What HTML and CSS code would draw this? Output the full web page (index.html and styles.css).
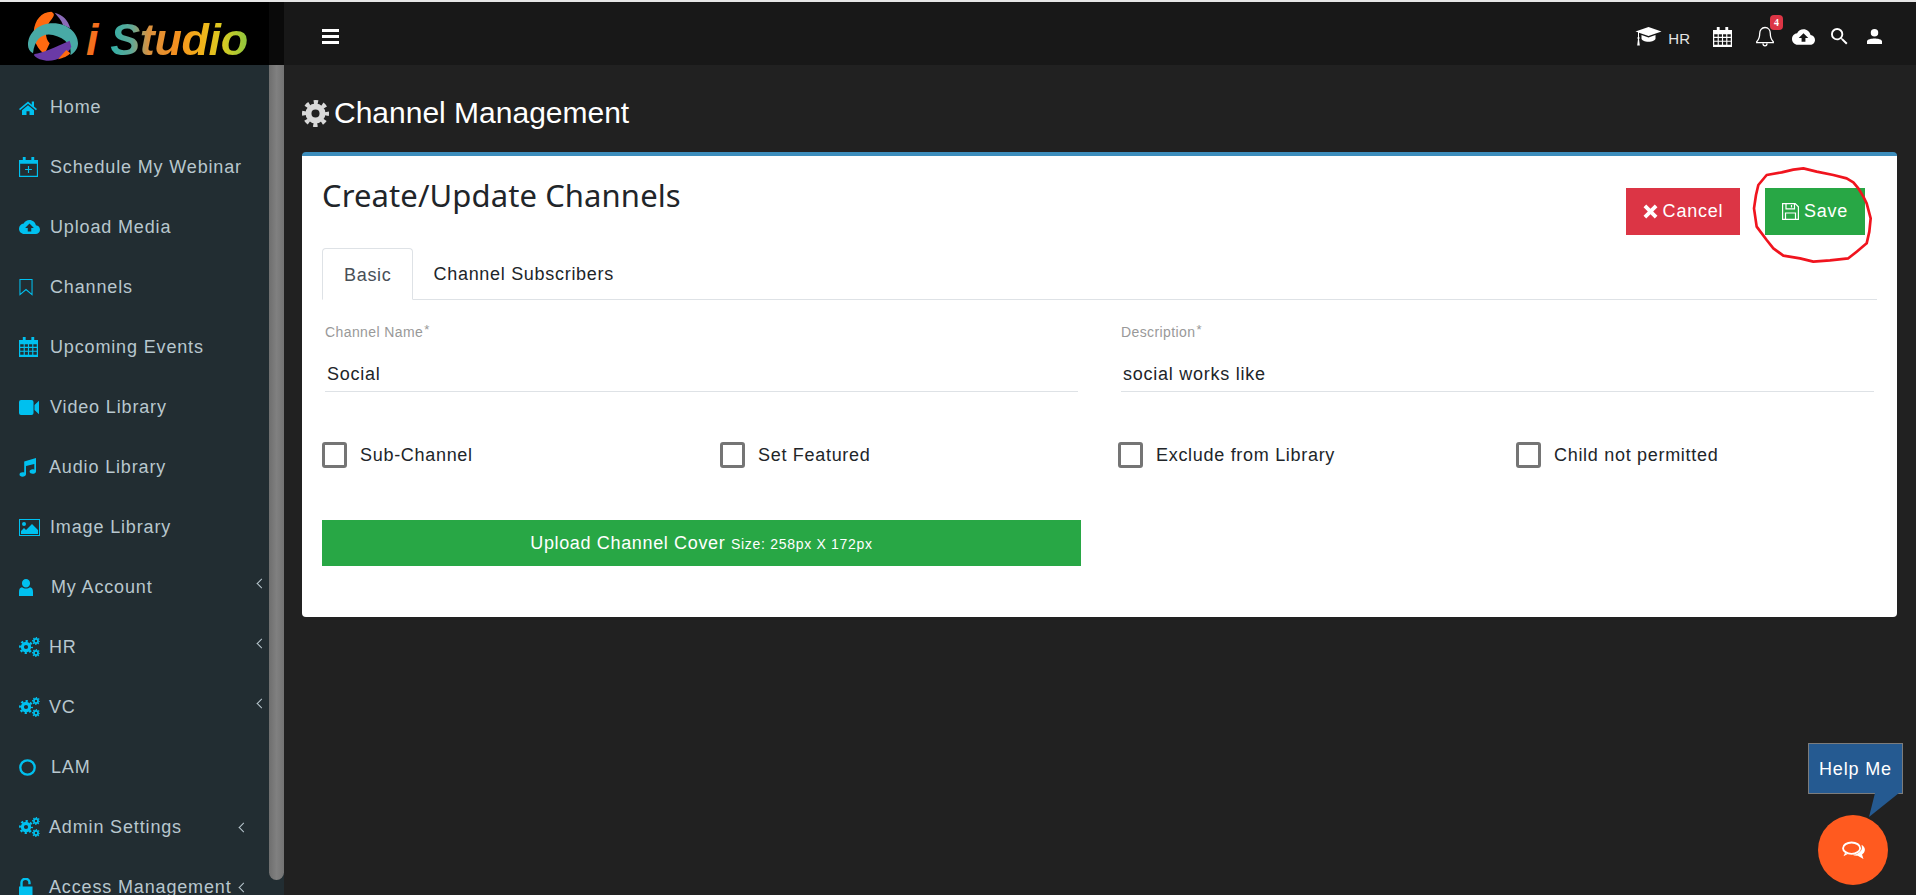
FILE: index.html
```html
<!DOCTYPE html>
<html lang="en">
<head>
    <meta charset="UTF-8">
    <meta name="viewport" content="width=device-width, initial-scale=1.0">
    <title>iStudio - Channel Management</title>
    <link rel="stylesheet" href="styles.css">
</head>
<body>
    <!-- Icon sprite -->
    <svg class="sprite" xmlns="http://www.w3.org/2000/svg">
        <symbol id="i-home" viewBox="0 0 24 20"><path d="M12 2 0 12l1.4 1.7L12 5l10.600 8.700L24 12l-4-3.300V2h-3v4.200zM4 13.500V20h6v-5h4v5h6v-6.500L12 7z"/></symbol>
        <symbol id="i-cal-plus" viewBox="0 0 20 21"><path fill-rule="evenodd" d="M4 0h3v3h6V0h3v3h4v18H0V3h4zM1.200 7v12.800h17.600V7zM9.400 9.500h1.200v3h3v1.200h-3v3H9.400v-3h-3v-1.200h3z"/></symbol>
        <symbol id="i-cloud-up" viewBox="0 0 24 18"><path fill-rule="evenodd" d="M19.350 7.040C18.670 3.590 15.640 1 12 1 9.110 1 6.600 2.640 5.350 5.040 2.340 5.360 0 7.910 0 11c0 3.310 2.690 6 6 6h13c2.760 0 5-2.240 5-5 0-2.640-2.050-4.780-4.650-4.960zM14 10v4h-4v-4H7l5-5 5 5z"/></symbol>
        <symbol id="i-bookmark" viewBox="0 0 14 18"><path fill="none" stroke="currentColor" stroke-width="1.100" d="M.6.600h12.800v16l-6.400-5.500-6.400 5.500z"/></symbol>
        <symbol id="i-calendar" viewBox="0 0 20 21"><path fill-rule="evenodd" d="M4 0h3v3h6V0h3v3h4v18H0V3h4zM1.300 7.500v2.800h3.600V7.500zm4.800 0v2.800h3.300V7.500zm4.500 0v2.800h3.300V7.500zm4.500 0v2.800h3.600V7.500zM1.300 11.500v2.900h3.600v-2.900zm4.800 0v2.900h3.300v-2.900zm4.500 0v2.900h3.300v-2.900zm4.500 0v2.900h3.600v-2.900zM1.300 15.600v3.100h3.600v-3.100zm4.800 0v3.100h3.300v-3.100zm4.500 0v3.100h3.300v-3.100zm4.500 0v3.100h3.600v-3.100z"/></symbol>
        <symbol id="i-video" viewBox="0 0 20 15"><path d="M2 0h10.500a2 2 0 0 1 2 2v11a2 2 0 0 1-2 2H2a2 2 0 0 1-2-2V2a2 2 0 0 1 2-2zM15.500 5 20 .8v13.400L15.500 10z"/></symbol>
        <symbol id="i-music" viewBox="0 0 17 19"><path d="M17 0v13.500c0 1.500-1.800 2.300-3.400 2.300s-3-.8-3-2.200 1.500-2.300 3-2.300c.6 0 1.200.1 1.700.4V6L7 8v8.300c0 1.500-1.800 2.400-3.500 2.400S.5 17.900.5 16.500s1.400-2.300 3-2.300c.6 0 1.200.1 1.700.4V3.500z"/></symbol>
        <symbol id="i-image" viewBox="0 0 21 17"><path fill-rule="evenodd" d="M0 0h21v17H0zm1 1v15h19V1zM5 3a2 2 0 1 1 0 4 2 2 0 0 1 0-4zM2 15v-3l3-3 2 2 6-6 6 6v4z"/></symbol>
        <symbol id="i-user" viewBox="0 0 14 17"><path d="M7 0a4 4 0 0 1 4 4.200A4 4 0 0 1 7 8.400a4 4 0 0 1-4-4.200A4 4 0 0 1 7 0zM3 8.200c1 .9 2.500 1.400 4 1.400s3-.5 4-1.400c1.900.3 3 1.700 3 4.800V17H0v-4c0-3.100 1.100-4.500 3-4.800z"/></symbol>
        <symbol id="i-gear" viewBox="2 2 20 20"><circle cx="12" cy="12" r="5.200" fill="none" stroke="currentColor" stroke-width="4.400"/><circle cx="12" cy="12" r="8.500" fill="none" stroke="currentColor" stroke-width="3" stroke-dasharray="3.200 3.480" stroke-dashoffset="1.600"/></symbol>
        <symbol id="i-gears" viewBox="0 0 21 20"><use href="#i-gear" x="0" y="3" width="14" height="14"/><use href="#i-gear" x="13" y="0" width="8" height="8"/><use href="#i-gear" x="13" y="12" width="8" height="8"/></symbol>
        <symbol id="i-circle" viewBox="0 0 17 17"><circle cx="8.500" cy="8.500" r="7.200" fill="none" stroke="currentColor" stroke-width="2.300"/></symbol>
        <symbol id="i-unlock" viewBox="0 0 14 19"><path fill="none" stroke="currentColor" stroke-width="2.400" d="M2.500 9V4.700a4 4 0 0 1 8 0v1.500"/><path d="M0 8.500h13.500V19H0z"/></symbol>
        <symbol id="i-cap" viewBox="0 0 26 19"><path fill-rule="evenodd" d="M13 0 26 4.500 13 9 3.500 5.700V10l.8 1-.8 1 .8 6.500H1.700L2.500 12l-.8-1 .8-1V5.300L0 4.500zM6 8l7 2.500L20 8v3.500c0 1.800-3.200 3.200-7 3.200s-7-1.400-7-3.200z"/></symbol>
        <symbol id="i-bell" viewBox="0 0 18 21"><path fill="none" stroke="currentColor" stroke-width="1.300" d="M9 1.500c-3.500 0-5.300 2.800-5.300 6 0 4.500-1.500 6.700-3 8.200v1h16.600v-1c-1.500-1.500-3-3.700-3-8.200 0-3.200-1.800-6-5.300-6zM7 17.500c0 1.300 1 2.300 2 2.300s2-1 2-2.300"/></symbol>
        <symbol id="i-search" viewBox="3 3 18 18"><path d="M15.500 14h-.79l-.28-.27A6.471 6.471 0 0 0 16 9.500 6.500 6.500 0 1 0 9.500 16c1.610 0 3.090-.59 4.230-1.570l.27.28v.79l5 4.990L20.490 19l-4.990-5zm-6 0C7.010 14 5 11.990 5 9.500S7.010 5 9.500 5 14 7.010 14 9.500 11.990 14 9.500 14z"/></symbol>
        <symbol id="i-person" viewBox="0 0 16 16"><path d="M8 0a3.500 3.500 0 1 1 0 8 3.500 3.500 0 0 1 0-8zM8 10c3 0 8 .9 8 3v3H0v-3c0-2.100 5-3 8-3z"/></symbol>
        <symbol id="i-times" viewBox="0 0 14 14"><path d="M3 .5 7 4.500 11 .5 13.500 3 9.500 7l4 4-2.500 2.500-4-4-4 4L.5 11l4-4-4-4z"/></symbol>
        <symbol id="i-floppy" viewBox="0 0 17 17"><path fill="none" stroke="currentColor" stroke-width="1.200" d="M.6.600h12.600l3.200 3.200v12.600H.6zM4 .6v5.200h8.500V.6M9.500 2v2.500M3.500 16.400V10h10v6.400"/></symbol>
        <symbol id="i-comments" viewBox="0 0 24 20"><ellipse cx="10" cy="7.500" rx="9" ry="6" fill="none" stroke="currentColor" stroke-width="2"/><path d="M3 12.500 1.500 16l5-2.500zM20.500 4c2.200 1.300 3.500 3.200 3.500 5.300 0 2-1.200 3.700-3 5l1.500 4.700-6-3.600c-2 .2-4-.1-5.700-.9 5.500-.4 10-3.500 10-7.500 0-.7-.1-1.400-.3-3z"/></symbol>
    </svg>

    <div class="app">
        <aside class="sidebar">
            <div class="logo-bar">
                <div class="logo">
                    <svg class="logo-mark" viewBox="82 33 153 150">
                        <path d="M165 38C190 45 205 60 212 85L190 75C185 60 175 50 165 38z" fill="#8a6bb8"/>
                        <path d="M155 35C125 35 105 60 102 95 100 120 115 150 135 162L150 130C135 115 135 85 150 65 160 52 170 42 155 35z" fill="#ff6a10"/>
                        <path d="M85 135C85 100 115 70 160 70 205 70 235 100 235 130 235 145 225 160 212 165 218 140 200 115 160 105 130 98 105 115 100 160 90 155 85 145 85 135z" fill="#48aaa6"/>
                        <path d="M120 178C105 170 100 165 105 162 125 160 170 140 210 122L215 140C205 165 170 185 140 182z" fill="#6a3aa6"/>
                        <path d="M175 178C190 175 205 168 212 160L200 150z" fill="#ff6a10"/>
                    </svg>
                    <span class="logo-text"><span class="logo-i">i</span> <span class="logo-name">Studio</span></span>
                </div>
            </div>
            <div class="side-body">
                <ul class="side-menu">
                    <li><svg class="ico ico-home"><use href="#i-home"/></svg><span>Home</span></li>
                    <li><svg class="ico ico-cal"><use href="#i-cal-plus"/></svg><span>Schedule My Webinar</span></li>
                    <li><svg class="ico ico-cloud"><use href="#i-cloud-up"/></svg><span>Upload Media</span></li>
                    <li><svg class="ico ico-book"><use href="#i-bookmark"/></svg><span>Channels</span></li>
                    <li><svg class="ico ico-cal"><use href="#i-calendar"/></svg><span>Upcoming Events</span></li>
                    <li><svg class="ico ico-video"><use href="#i-video"/></svg><span>Video Library</span></li>
                    <li><svg class="ico ico-music"><use href="#i-music"/></svg><span>Audio Library</span></li>
                    <li><svg class="ico ico-image"><use href="#i-image"/></svg><span>Image Library</span></li>
                    <li class="has-sub"><svg class="ico ico-user"><use href="#i-user"/></svg><span>My Account</span><i class="chev"></i></li>
                    <li class="has-sub"><svg class="ico ico-gears"><use href="#i-gears"/></svg><span>HR</span><i class="chev"></i></li>
                    <li class="has-sub"><svg class="ico ico-gears"><use href="#i-gears"/></svg><span>VC</span><i class="chev"></i></li>
                    <li><svg class="ico ico-circle"><use href="#i-circle"/></svg><span>LAM</span></li>
                    <li class="has-sub inner"><svg class="ico ico-gears"><use href="#i-gears"/></svg><span>Admin Settings</span><i class="chev"></i></li>
                    <li class="has-sub inner"><svg class="ico ico-lock"><use href="#i-unlock"/></svg><span>Access Management</span><i class="chev"></i></li>
                </ul>
                <div class="side-track"><div class="side-thumb"></div></div>
            </div>
        </aside>

        <main class="main">
            <header class="topbar">
                <button class="menu-toggle" type="button" aria-label="Menu"><span></span><span></span><span></span></button>
                <div class="top-actions">
                    <div class="top-role"><svg class="top-cap"><use href="#i-cap"/></svg><span>HR</span></div>
                    <svg class="top-calendar"><use href="#i-calendar"/></svg>
                    <div class="top-bell"><svg class="top-bell-ico"><use href="#i-bell"/></svg><b class="badge">4</b></div>
                    <svg class="top-cloud"><use href="#i-cloud-up"/></svg>
                    <svg class="top-search"><use href="#i-search"/></svg>
                    <svg class="top-person"><use href="#i-person"/></svg>
                </div>
            </header>

            <section class="content">
                <h1 class="page-title"><svg class="title-gear"><use href="#i-gear"/></svg>Channel Management</h1>

                <div class="card">
                    <div class="card-head">
                        <h2>Create/Update Channels</h2>
                        <div class="card-actions">
                            <button class="btn btn-cancel" type="button"><svg class="btn-ico"><use href="#i-times"/></svg>Cancel</button>
                            <button class="btn btn-save" type="button"><svg class="btn-ico"><use href="#i-floppy"/></svg>Save</button>
                            <!-- red hand-drawn mark around Save -->
                            <svg class="scribble" viewBox="450 40 375 300"><path d="M500 70 545 62 580 54 610 50 650 60 700 70 740 80 760 92 775 110 790 135 800 155 812 200 808 240 800 275 770 300 745 320 690 326 640 330 600 320 550 312 520 290 500 265 470 225 462 170 468 130 475 100z"/></svg>
                        </div>
                    </div>

                    <ul class="tabs">
                        <li class="tab active">Basic</li>
                        <li class="tab">Channel Subscribers</li>
                    </ul>

                    <div class="fields">
                        <div class="field">
                            <label>Channel Name<sup>*</sup></label>
                            <div class="field-value">Social</div>
                        </div>
                        <div class="field">
                            <label>Description<sup>*</sup></label>
                            <div class="field-value">social works like</div>
                        </div>
                    </div>

                    <div class="checks">
                        <div class="check"><i class="box"></i>Sub-Channel</div>
                        <div class="check"><i class="box"></i>Set Featured</div>
                        <div class="check"><i class="box"></i>Exclude from Library</div>
                        <div class="check"><i class="box"></i>Child not permitted</div>
                    </div>

                    <button class="upload-btn" type="button">Upload Channel Cover <small>Size: 258px X 172px</small></button>
                </div>
            </section>
        </main>
    </div>

    <!-- Floating help -->
    <div class="help-bubble">Help Me</div>
    <svg class="help-tail" viewBox="0 0 34 26"><path d="M6 0h24L0 24z" fill="#255a91"/></svg>
    <button class="help-btn" type="button" aria-label="Help"><svg><use href="#i-comments"/></svg></button>
</body>
</html>
```

FILE: styles.css
```css
/* Base */
* {
    box-sizing: border-box;
}

html, body {
    height: 100%;
}

body {
    margin: 0;
    overflow: hidden;
    background-color: #212121;
    border-top: 2px solid #e6e6e6;
    font-family: "Liberation Sans", Arial, sans-serif;
    color: #212529;
}

ul {
    list-style: none;
    margin: 0;
    padding: 0;
}

button {
    border: none;
    font-family: inherit;
    cursor: pointer;
}

svg {
    fill: currentColor;
}

.sprite {
    position: absolute;
    width: 0;
    height: 0;
}

.app {
    display: flex;
    height: 100%;
}

/* Sidebar */
.sidebar {
    width: 284px;
    flex-shrink: 0;
    display: flex;
    flex-direction: column;
    overflow: hidden;
    background-color: #222d32;
}

.logo-bar {
    height: 63px;
    flex-shrink: 0;
    background-color: #0a0a0a;
}

.logo {
    width: 269px;
    height: 63px;
    display: flex;
    align-items: flex-start;
    padding: 9px 0 0 27px;
    background-color: #000;
}

.logo-mark {
    width: 51px;
    height: 50px;
    flex-shrink: 0;
}

.logo-text {
    margin: 3px 0 0 8px;
    font-size: 45px;
    line-height: 52px;
    font-weight: bold;
    font-style: italic;
    white-space: pre;
    letter-spacing: -.4px;
}

.logo-i {
    color: #f4701e;
}

.logo-name {
    background: linear-gradient(90deg, #2fb0a8 0%, #62a896 16%, #d9913f 28%, #f5901f 48%, #f2b21a 66%, #d8cc22 82%, #8cc63f 100%);
    -webkit-background-clip: text;
    background-clip: text;
    color: transparent;
}

.side-body {
    flex: 1;
    display: flex;
    min-height: 0;
    overflow: hidden;
}

.side-menu {
    width: 269px;
    flex-shrink: 0;
    padding-top: 12px;
}

.side-menu li {
    height: 60px;
    display: flex;
    align-items: center;
    padding-left: 19px;
    font-size: 18px;
    letter-spacing: .85px;
    color: #b8c7ce;
    white-space: nowrap;
}

.ico {
    width: 21px;
    height: 20px;
    margin-right: 10px;
    flex-shrink: 0;
    color: #00c0ef;
}

.ico-home { width: 18px; height: 15px; margin-right: 13px; }
.ico-cal { width: 19px; height: 20px; margin-right: 12px; }
.ico-cloud { width: 21px; height: 16px; margin-right: 10px; }
.ico-book { width: 14px; height: 17px; margin-right: 17px; }
.ico-video { width: 20px; height: 15px; margin-right: 11px; }
.ico-music { width: 17px; height: 19px; margin-right: 13px; }
.ico-image { width: 21px; height: 17px; margin-right: 10px; }
.ico-user { width: 14px; height: 17px; margin-right: 18px; }
.ico-lock { width: 14px; height: 19px; margin-right: 16px; }
.ico-gears { width: 21px; height: 20px; margin-right: 9px; }
.ico-circle { width: 17px; height: 17px; margin-right: 15px; }

.chev {
    position: absolute;
    left: 258px;
    width: 7px;
    height: 7px;
    margin-top: -8px;
    border-left: 1.500px solid #b8c7ce;
    border-bottom: 1.500px solid #b8c7ce;
    transform: rotate(45deg);
}

.has-sub.inner .chev {
    left: 240px;
    margin-top: 0;
}

.side-track {
    width: 15px;
    flex-shrink: 0;
    background-color: #222d32;
}

.side-thumb {
    height: 815px;
    border-radius: 0 0 8px 8px;
    background: linear-gradient(90deg, #6e6e6e, #808080 50%, #737373);
}

/* Top bar */
.main {
    flex: 1;
    min-width: 0;
    display: flex;
    flex-direction: column;
}

.topbar {
    height: 63px;
    flex-shrink: 0;
    display: flex;
    align-items: center;
    justify-content: space-between;
    padding-top: 6px;
    background-color: #181818;
    color: #fff;
}

.menu-toggle {
    display: flex;
    flex-direction: column;
    gap: 3px;
    margin-left: 38px;
    padding: 0;
    background: none;
}

.menu-toggle span {
    display: block;
    width: 17px;
    height: 3px;
    background-color: #fff;
}

.top-actions {
    display: flex;
    align-items: center;
    margin-right: 34px;
}

.top-role {
    display: flex;
    align-items: center;
    font-size: 15px;
}

.top-role span {
    margin: 4px 0 0 6px;
    font-weight: 300;
    color: #e4e4e4;
}

.top-cap { width: 27px; height: 19px; }
.top-calendar { width: 19px; height: 20px; margin-left: 23px; }

.top-bell {
    position: relative;
    margin-left: 24px;
    height: 21px;
}

.top-bell-ico { width: 18px; height: 21px; }

.badge {
    position: absolute;
    top: -11px;
    left: 14px;
    width: 13px;
    height: 15px;
    border-radius: 4px;
    background-color: #dc3545;
    font-family: "Liberation Serif", serif;
    font-size: 10px;
    line-height: 15px;
    text-align: center;
}

.top-cloud { width: 23px; height: 18px; margin-left: 18px; }
.top-search { width: 17px; height: 17px; margin-left: 16px; }
.top-person { width: 15px; height: 15px; margin-left: 19px; }

/* Content */
.content {
    flex: 1;
    padding: 0 19px 0 18px;
}

.page-title {
    display: flex;
    align-items: center;
    height: 87px;
    margin: 0;
    padding-top: 9px;
    font-size: 30px;
    font-weight: normal;
    color: #fff;
}

.title-gear {
    width: 27px;
    height: 27px;
    margin-right: 5px;
    color: #d9d9d9;
}

.card {
    height: 465px;
    padding: 0 20px;
    border-top: 4px solid #3c8dbc;
    border-radius: 4px;
    background-color: #fff;
}

.card-head {
    position: relative;
    display: flex;
    justify-content: space-between;
    height: 92px;
}

.card-head h2 {
    margin: 19px 0 0;
    font-family: "Noto Sans", sans-serif;
    font-size: 31px;
    line-height: 40px;
    letter-spacing: .1px;
    font-weight: normal;
    color: #212529;
}

.card-actions {
    display: flex;
    gap: 25px;
    margin-top: 32px;
    margin-right: 12px;
    height: 47px;
}

.btn {
    display: flex;
    align-items: center;
    justify-content: center;
    height: 47px;
    font-size: 18px;
    letter-spacing: .8px;
    color: #fff;
}

.btn-cancel {
    width: 114px;
    background-color: #dc3545;
}

.btn-save {
    width: 100px;
    background-color: #28a745;
}

.btn-ico {
    width: 15px;
    height: 15px;
    margin-right: 5px;
}

.btn-save .btn-ico {
    width: 17px;
    height: 17px;
}

.scribble {
    position: absolute;
    top: 9px;
    right: 2px;
    width: 125px;
    height: 100px;
}

.scribble path {
    fill: none;
    stroke: #f0141e;
    stroke-width: 8;
    stroke-linejoin: round;
}

.tabs {
    display: flex;
    height: 52px;
    border-bottom: 1px solid #dee2e6;
}

.tab {
    padding: 0 21px;
    line-height: 52px;
    font-size: 18px;
    letter-spacing: .7px;
    color: #212529;
}

.tab.active {
    margin-bottom: -1px;
    height: 52px;
    padding-right: 20px;
    border: 1px solid #dee2e6;
    border-bottom-color: #fff;
    border-radius: 4px 4px 0 0;
    color: #495057;
}

.fields {
    display: flex;
    gap: 43px;
    padding: 0 3px;
    margin-top: 24px;
}

.field {
    flex: 1;
}

.field label {
    display: block;
    font-size: 14px;
    line-height: 16px;
    letter-spacing: .4px;
    color: #999;
}

.field label sup {
    position: relative;
    top: 3px;
    font-size: 13px;
    line-height: 0;
    margin-left: 1px;
}

.field-value {
    height: 52px;
    padding: 23px 0 0 2px;
    border-bottom: 1px solid #dee2e6;
    font-size: 18px;
    line-height: 22px;
    letter-spacing: .75px;
    color: #212529;
}

.checks {
    display: grid;
    grid-template-columns: repeat(4, 398px);
    margin-top: 50px;
}

.check {
    display: flex;
    align-items: center;
    font-size: 18px;
    line-height: 26px;
    letter-spacing: .7px;
    color: #212529;
}

.box {
    width: 25px;
    height: 26px;
    margin-right: 13px;
    border: 3px solid #757575;
    border-radius: 3px;
}

.upload-btn {
    display: block;
    width: 759px;
    height: 46px;
    margin-top: 52px;
    background-color: #28a745;
    font-size: 18px;
    letter-spacing: .65px;
    color: #fff;
}

.upload-btn small {
    font-size: 14px;
    font-weight: normal;
    letter-spacing: .7px;
}

/* Floating help */
.help-bubble {
    position: fixed;
    left: 1808px;
    top: 743px;
    width: 95px;
    height: 51px;
    border: 1px solid #7c7c7c;
    background-color: #255a91;
    color: #fff;
    font-size: 18px;
    letter-spacing: .85px;
    line-height: 51px;
    text-align: center;
}

.help-tail {
    position: fixed;
    left: 1869px;
    top: 793px;
    width: 34px;
    height: 26px;
}

.help-btn {
    position: fixed;
    left: 1818px;
    top: 815px;
    display: flex;
    align-items: center;
    justify-content: center;
    width: 70px;
    height: 70px;
    padding: 0;
    border-radius: 50%;
    background-color: #ff5a1f;
    color: #fff;
}

.help-btn svg {
    width: 23px;
    height: 19px;
}
```
